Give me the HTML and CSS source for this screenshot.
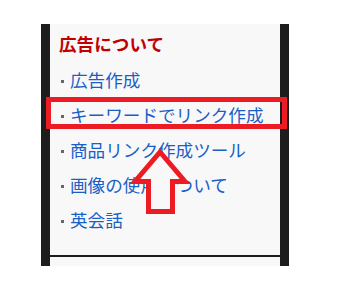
FILE: index.html
```html
<!DOCTYPE html>
<html lang="ja">
<head>
<meta charset="utf-8">
<title>広告について</title>
<link rel="stylesheet" href="styles.css">
</head>
<body>
<div class="page">
  <aside class="sidebar">
    <section class="widget">
      <h3 class="widget-title">広告について</h3>
      <ul class="link-list">
        <li><a href="#">広告作成</a></li>
        <li><a href="#">キーワードでリンク作成</a></li>
        <li><a href="#">商品リンク作成ツール</a></li>
        <li><a href="#">画像の使用について</a></li>
        <li><a href="#">英会話</a></li>
      </ul>
    </section>
    <div class="widget-divider"></div>
  </aside>
  <div class="annot-box"></div>
  <svg class="annot-arrow" width="341" height="305" viewBox="0 0 341 305" aria-hidden="true">
    <polygon points="160,152 135,181.5 148.5,181.5 148.5,211.5 172.5,211.5 172.5,181.5 185,181.5" fill="#f8f8f8" stroke="#ed1c24" stroke-width="5" stroke-linejoin="miter" stroke-miterlimit="10"/>
  </svg>
</div>
</body>
</html>
```
FILE: styles.css
```css
html, body {
  margin: 0;
  padding: 0;
  background: #ffffff;
}

body {
  font-family: "Noto Sans CJK JP", "Noto Sans", sans-serif;
}

.page {
  position: relative;
  width: 341px;
  height: 305px;
  padding: 24px 0 0 41px;
  box-sizing: border-box;
  overflow: hidden;
}

.sidebar {
  width: 248px;
  box-sizing: border-box;
  background: #f8f8f8;
  border-left: 9px solid #1d1d1d;
  border-right: 9px solid #1d1d1d;
  padding-bottom: 9px;
}

.widget {
  padding: 7px 9px 18px 9px;
}

.widget-title {
  margin: 0 0 5px 0;
  font-size: 17.6px;
  line-height: 26px;
  font-weight: bold;
  color: #c00000;
}

.link-list {
  list-style: none;
  margin: 0;
  padding: 0;
}

.link-list li {
  display: flex;
  align-items: center;
  height: 35px;
  font-size: 17.6px;
  white-space: nowrap;
}

.link-list li::before {
  content: "";
  width: 3px;
  height: 3px;
  margin: 3px 6px 0 2px;
  background: #666666;
  flex: none;
}

.link-list a {
  color: #1a5fc6;
  text-decoration: none;
}

.widget-divider {
  height: 2px;
  background: #1d1d1d;
}

.annot-box {
  position: absolute;
  left: 46px;
  top: 97px;
  width: 241px;
  height: 32px;
  box-sizing: border-box;
  border: 5px solid #ed1c24;
}

.annot-arrow {
  position: absolute;
  left: 0;
  top: 0;
}
```
